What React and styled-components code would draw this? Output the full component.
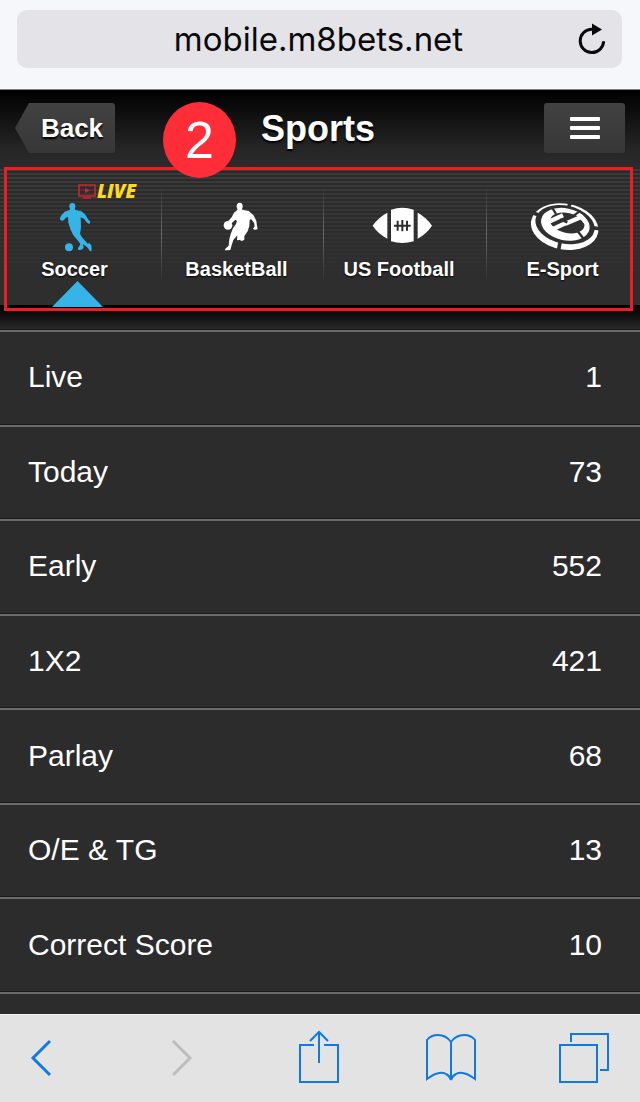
import React from "react";
import styled, { createGlobalStyle } from "styled-components";

const GlobalStyle = createGlobalStyle`
  * {
    box-sizing: border-box;
  }
  body {
    margin: 0;
    background: #2c2c2c;
    font-family: "Liberation Sans", Arial, sans-serif;
  }
  button {
    border: 0;
    padding: 0;
    background: none;
    font-family: inherit;
    cursor: pointer;
  }
  svg {
    display: block;
  }
`;

const Page = styled.div`
  display: flex;
  flex-direction: column;
  min-height: 100vh;
`;

const AddressBar = styled.div`
  height: 90px;
  padding: 10px 18px 0 17px;
  background: #f6f7fa;
  border-bottom: 1px solid #7d7f80;
`;

const AddressField = styled.div`
  display: flex;
  align-items: center;
  height: 58px;
  padding: 0 12px;
  border-radius: 10px;
  background: #e3e3e8;
`;

const Url = styled.input`
  flex: 1;
  min-width: 0;
  padding: 0 0 0 34px;
  border: 0;
  outline: 0;
  background: transparent;
  color: #0a0a0a;
  font-family: Inter, Roboto, sans-serif;
  font-size: 33px;
  line-height: 40px;
  text-align: center;
`;

const ReloadButton = styled.button`
  display: flex;
  justify-content: center;
  width: 36px;
`;

const Header = styled.header`
  position: relative;
  display: grid;
  grid-template-columns: 1fr auto 1fr;
  align-items: start;
  height: 77px;
  padding: 13px 15px 0;
  background: linear-gradient(#000 0, #262626 60px, #2b2b2b 100%);
`;

const BackButton = styled.button`
  width: 100px;
  height: 50px;
  padding-left: 14px;
  border-radius: 3px;
  background: linear-gradient(#424242, #373737);
  clip-path: polygon(14px 0, 100% 0, 100% 100%, 14px 100%, 0 50%);
  color: #fff;
  font-size: 26px;
  font-weight: bold;
  text-shadow: 0 2px 2px #000;
`;

const Title = styled.h1`
  margin: 0;
  padding-right: 4px;
  color: #fff;
  font-size: 36px;
  line-height: 52px;
  text-shadow: 0 2px 2px #000;
`;

const MenuButton = styled.button`
  display: flex;
  flex-direction: column;
  align-items: center;
  justify-content: center;
  gap: 5px;
  justify-self: end;
  width: 81px;
  height: 50px;
  border-radius: 3px;
  background: linear-gradient(#424242, #373737);
`;

const MenuLine = styled.span`
  width: 30px;
  height: 4px;
  border-radius: 1px;
  background: #fff;
`;

const StepBadge = styled.span`
  position: absolute;
  top: 12px;
  left: 163px;
  z-index: 2;
  width: 73px;
  height: 76px;
  border-radius: 50%;
  background: #ff2d37;
  color: #fff;
  font-size: 52px;
  line-height: 76px;
  text-align: center;
`;

const Tabs = styled.nav`
  position: relative;
  display: grid;
  grid-template-columns: 162fr 162fr 163fr 153fr;
  height: 138px;
  background: linear-gradient(rgba(44, 44, 44, 0), #2e2e2e 80%),
    repeating-linear-gradient(#2a2a2a 0, #2a2a2a 2px, #3b3b3b 2px, #3b3b3b 4px);
`;

const Tab = styled.a`
  position: relative;
  display: flex;
  flex-direction: column;
  align-items: center;
  gap: 5px;
  padding: 35px ${(props) => (props.$last ? "2px" : "13px")} 0 0;
  color: ${(props) => (props.$active ? "#36b4e8" : "#fff")};
  text-decoration: none;

  &:not(:last-of-type)::after {
    content: "";
    position: absolute;
    top: 18px;
    right: 0;
    width: 1px;
    height: 98px;
    background: linear-gradient(transparent, #6a6a6a 50%, transparent);
  }
`;

const TabLabel = styled.span`
  color: #fff;
  font-size: 20px;
  font-weight: bold;
  line-height: 24px;
  text-shadow: 0 1px 2px #000;
`;

const LiveTag = styled.span`
  position: absolute;
  top: 12px;
  left: 78px;
  display: flex;
  align-items: center;
  gap: 1px;
  color: #ffd91c;
  font-family: "Open Sans", sans-serif;
  font-size: 19px;
  font-style: italic;
  font-weight: 800;
  line-height: 24px;
`;

const ActiveArrow = styled.span`
  position: absolute;
  bottom: -2px;
  left: 52px;
  width: 51px;
  height: 26px;
  background: #36b4e8;
  clip-path: polygon(50% 0, 100% 100%, 0 100%);
`;

const Highlight = styled.div`
  position: absolute;
  inset: 0 7px -6px 4px;
  border: 3px solid #ee1c25;
  pointer-events: none;
`;

const Shade = styled.div`
  height: 25px;
  background: linear-gradient(#000 0, #0c0c0c 8px, #2a2a2a);
`;

const List = styled.ul`
  flex: 1;
  display: grid;
  grid-auto-rows: minmax(60px, 1fr);
  margin: 0;
  padding: 0;
  list-style: none;
`;

const Row = styled.li`
  display: flex;
  border-top: 2px solid #6b6b6b;
  box-shadow: 0 -1px 0 #1a1a1a;
`;

const RowLink = styled.a`
  flex: 1;
  display: flex;
  align-items: center;
  justify-content: space-between;
  padding: 0 38px 2px 28px;
  color: #fff;
  font-size: 30px;
  line-height: 36px;
  text-decoration: none;
`;

const ListEnd = styled.div`
  height: 22px;
  border-top: 2px solid #6b6b6b;
  box-shadow: 0 -1px 0 #1a1a1a;
`;

const BottomBar = styled.footer`
  display: flex;
  align-items: center;
  justify-content: space-between;
  height: 88px;
  padding: 0 31px 0 12px;
  background: #e3e3e3;
  box-shadow: inset 0 1px 0 #f4f4f4;
`;

const ToolButton = styled.button`
  display: flex;
  justify-content: center;
  width: ${(props) => (props.$wide ? "58px" : "50px")};
  color: ${(props) => (props.disabled ? "#bdbdbd" : "#0f7ae5")};
`;

const ToolIcon = ({ width, strokeWidth = 2, children }) => (
  <svg
    width={width}
    height="56"
    viewBox={`0 0 ${width} 56`}
    fill="none"
    stroke="currentColor"
    strokeWidth={strokeWidth}
    aria-hidden="true"
  >
    {children}
  </svg>
);

const ReloadIcon = () => (
  <svg width="28" height="32" viewBox="0 0 28 32" aria-hidden="true">
    <path
      d="M25.6 18.2A11.7 11.7 0 1 1 14 6.2h3"
      fill="none"
      stroke="#0a0a0a"
      strokeWidth="3"
    />
    <path d="M14 .5 24 6.6 14 12.5z" fill="#0a0a0a" />
  </svg>
);

const SoccerIcon = () => (
  <svg width="34" height="50" viewBox="168 126 102 150" fill="currentColor" aria-hidden="true">
    <ellipse cx="211" cy="139" rx="9" ry="10" />
    <path d="M204 145L203 150 188 155 178 166Q172 176 175 180 182 184 187 179L191 173 198 171 199 188 205 207 214 226 228 242 235 252Q233 260 228 264 226 271 233 270 241 270 245 264L243 253 248 256 257 263 264 273Q269 275 269 270L268 256 262 249 257 251 240 232 234 222 237 203 236 172 246 176 254 187Q260 195 265 188 264 181 259 179L249 163 238 154 220 150 219 145z" />
    <circle cx="201" cy="262" r="12" />
  </svg>
);

const BasketballIcon = () => (
  <svg width="44" height="50" viewBox="165 126 132 150" fill="currentColor" aria-hidden="true">
    <ellipse cx="239" cy="139" rx="9" ry="11" />
    <path d="M233 145L232 150 222 158 215 172 205 183 213 191 226 179 231 183 228 192 219 205 212 222 208 238 206 257 196 266Q193 272 200 271L211 270 215 256 220 240 232 226 231 241 239 240 246 243 253 239 253 228 263 214 268 198 269 181 273 177 282 188 284 199 279 206Q284 212 293 207L291 198 289 182 280 165 266 153 247 149 246 145z" />
    <circle cx="204" cy="196" r="13" />
  </svg>
);

const FootballIcon = () => (
  <svg width="66" height="50" viewBox="138 126 198 150" fill="currentColor" aria-hidden="true">
    <path d="M158 197Q175 172 202 158V236Q175 222 158 197zM336 197Q319 172 293 158V236Q319 222 336 197zM213 149Q247 138 281 149V244Q247 254 213 244z" />
    <path
      d="M222 197h50M233 182v30M247 180v34M261 182v30"
      fill="none"
      stroke="#2e2e2e"
      strokeWidth="6"
    />
  </svg>
);

const EsportIcon = () => (
  <svg width="74" height="50" viewBox="138 126 222 150" fill="none" aria-hidden="true">
    <ellipse cx="254" cy="200" rx="102" ry="69" transform="rotate(10 254 200)" fill="currentColor" />
    <ellipse cx="255" cy="194" rx="90" ry="57" transform="rotate(12 255 194)" fill="#303030" />
    <path
      d="M150 155L184 168M273 122L262 152M328 202L366 207M241 242L234 280"
      stroke="#303030"
      strokeWidth="11"
    />
    <ellipse cx="256" cy="193" rx="74" ry="48" transform="rotate(12 256 193)" fill="currentColor" />
    <ellipse cx="262" cy="189" rx="52" ry="30" transform="rotate(12 262 189)" fill="#303030" />
    <path
      d="M205 186L249 166M214 209L258 189M256 191L304 171L316 186"
      stroke="currentColor"
      strokeWidth="13"
    />
    <path
      d="M216 142L228 162M282 166L302 152M292 212L312 238M240 178L262 187"
      stroke="#303030"
      strokeWidth="7"
    />
  </svg>
);

const tabs = [
  { label: "Soccer", Icon: SoccerIcon, active: true, live: true },
  { label: "BasketBall", Icon: BasketballIcon },
  { label: "US Football", Icon: FootballIcon },
  { label: "E-Sport", Icon: EsportIcon },
];

const markets = [
  { name: "Live", count: 1 },
  { name: "Today", count: 73 },
  { name: "Early", count: 552 },
  { name: "1X2", count: 421 },
  { name: "Parlay", count: 68 },
  { name: "O/E & TG", count: 13 },
  { name: "Correct Score", count: 10 },
];

export default function App() {
  return (
    <Page>
      <GlobalStyle />
      <AddressBar>
        <AddressField>
          <Url aria-label="Address" defaultValue="mobile.m8bets.net" />
          <ReloadButton aria-label="Reload">
            <ReloadIcon />
          </ReloadButton>
        </AddressField>
      </AddressBar>

      <Header>
        <BackButton>Back</BackButton>
        <Title>Sports</Title>
        <MenuButton aria-label="Menu">
          <MenuLine />
          <MenuLine />
          <MenuLine />
        </MenuButton>
        <StepBadge>2</StepBadge>
      </Header>

      <Tabs>
        {tabs.map(({ label, Icon, active, live }, i) => (
          <Tab key={label} href="#" $active={active} $last={i === tabs.length - 1}>
            {live && (
              <LiveTag>
                <svg width="18" height="15" viewBox="0 0 18 15" aria-hidden="true">
                  <path
                    d="M1 1h16v11H1zM5 14h8"
                    fill="none"
                    stroke="#d8232a"
                    strokeWidth="1.5"
                  />
                  <path d="M7 4l5 2.5L7 9z" fill="#d8232a" />
                </svg>
                LIVE
              </LiveTag>
            )}
            <Icon />
            <TabLabel>{label}</TabLabel>
            {active && <ActiveArrow />}
          </Tab>
        ))}
        <Highlight />
      </Tabs>
      <Shade />

      <List>
        {markets.map((market) => (
          <Row key={market.name}>
            <RowLink href="#">
              <span>{market.name}</span>
              <span>{market.count}</span>
            </RowLink>
          </Row>
        ))}
      </List>
      <ListEnd />

      <BottomBar>
        <ToolButton $wide aria-label="Previous page">
          <ToolIcon width={22} strokeWidth={3}>
            <path d="M20 11 3 28l17 17" />
          </ToolIcon>
        </ToolButton>
        <ToolButton $wide disabled aria-label="Next page">
          <ToolIcon width={22} strokeWidth={3}>
            <path d="M2 11l17 17L2 45" />
          </ToolIcon>
        </ToolButton>
        <ToolButton aria-label="Share">
          <ToolIcon width={40}>
            <path d="M15 15H1v37h38V15H25M20 33V2M11 11l9-9 9 9" />
          </ToolIcon>
        </ToolButton>
        <ToolButton aria-label="Bookmarks">
          <ToolIcon width={50}>
            <path d="M25 12Q20 5 12 5 5 5 1 10v39q12-9 19-5 4 2 5 6 1-4 5-6 7-4 19 5V10q-4-5-11-5-8 0-13 7v38" />
          </ToolIcon>
        </ToolButton>
        <ToolButton aria-label="Open tabs">
          <ToolIcon width={50}>
            <path d="M1 15h37v37H1zM12 12V4h37v36h-8" />
          </ToolIcon>
        </ToolButton>
      </BottomBar>
    </Page>
  );
}
